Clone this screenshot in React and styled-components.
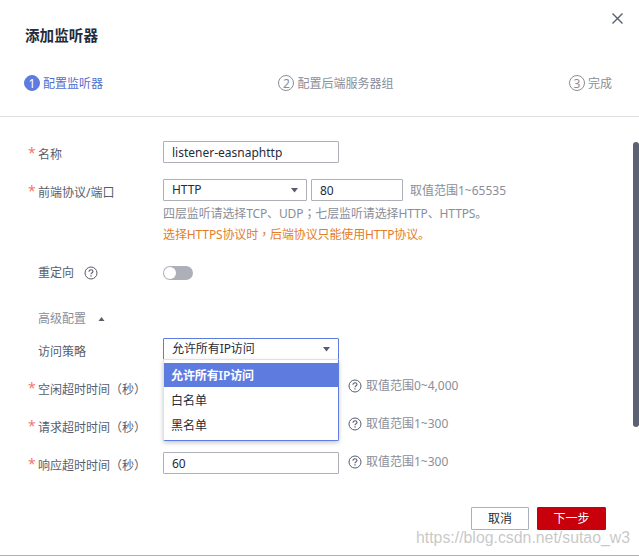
import styled, { createGlobalStyle } from "styled-components";

const GlobalStyle = createGlobalStyle`
  * {
    box-sizing: border-box;
  }

  body {
    margin: 0;
    background: #fff;
    overflow: hidden;
    font-family: "Noto Sans", "Noto Sans CJK SC", sans-serif;
    font-size: 12px;
    line-height: 20px;
    color: #575d6c;
  }
`;

const Dialog = styled.div`
  position: relative;
  display: flex;
  flex-direction: column;
  width: 639px;
  height: 556px;
  border-bottom: 1px solid #b0b0b0;
`;

const Header = styled.header`
  display: flex;
  justify-content: space-between;
  height: 73px;
  padding: 0 16px 0 25px;
`;

const Title = styled.h1`
  margin: 24px 0 0;
  font-size: 14.6px;
  font-weight: 700;
  line-height: 22px;
  color: #252b3a;
`;

const CloseButton = styled.button`
  width: 11px;
  height: 11px;
  margin-top: 13px;
  padding: 0;
  border: 0;
  background: none;

  svg {
    display: block;
  }
`;

const Steps = styled.div`
  display: flex;
  justify-content: space-between;
  height: 44px;
  padding: 0 27px 0 24px;
  border-bottom: 1px solid #dfdfe1;
`;

const StepItem = styled.div`
  display: flex;
  height: 20px;
  gap: 3px;
  color: ${(props) => (props.$active ? "#526ecc" : "#8a8e99")};
  line-height: 22px;

  span {
    width: 16px;
    height: 16px;
    margin-top: 2px;
    border: 1px solid ${(props) => (props.$active ? "#5e7ce0" : "#8a8e99")};
    border-radius: 50%;
    background: ${(props) => (props.$active ? "#5e7ce0" : "#fff")};
    color: ${(props) => (props.$active ? "#fff" : "#8a8e99")};
    line-height: 15px;
    text-align: center;
  }
`;

const Main = styled.main`
  display: flex;
  justify-content: space-between;
  height: 390px;
`;

const Form = styled.div`
  padding: 24px 0 0 28px;
`;

const Row = styled.div`
  display: flex;
  height: ${(props) => props.$height || 38}px;
`;

const Label = styled.div`
  display: flex;
  width: 135px;
  height: 20px;
  margin-top: ${(props) => props.$top ?? 4}px;
  color: ${(props) => (props.$muted ? "#8a8e99" : "#575d6c")};
  white-space: nowrap;
`;

const Mark = styled.span`
  width: 10px;
  color: #f66f6a;
  font-family: "Open Sans", sans-serif;
  font-size: 14px;
  line-height: 16px;
`;

const Controls = styled.div`
  display: flex;
  gap: 4px;
`;

const Input = styled.input`
  width: ${(props) => props.$width || 176}px;
  height: 22px;
  padding: 1px 8px 0;
  border: 1px solid #adb0b8;
  border-radius: 1px;
  outline: 0;
  background: #fff;
  color: #252b3a;
  font: inherit;
`;

const SelectBox = styled.div`
  display: flex;
  justify-content: space-between;
  width: ${(props) => props.$width}px;
  height: 22px;
  padding: 0 8px;
  border: 1px solid ${(props) => (props.$open ? "#5e7ce0" : "#adb0b8")};
  border-radius: 1px;
  color: #252b3a;
  letter-spacing: -0.08px;
  line-height: 20px;

  svg {
    margin-top: 8px;
  }
`;

const SelectWrap = styled.div`
  position: relative;
`;

const Menu = styled.ul`
  position: absolute;
  z-index: 1;
  top: 21px;
  left: 0;
  width: 176px;
  height: 82px;
  margin: 0;
  padding: 3px 0 0;
  border: 1px solid #5e7ce0;
  border-top-color: #dfe1e6;
  border-left-color: #dfe1e6;
  border-radius: 0 0 2px 2px;
  background: #fff;
  box-shadow: 0 2px 4px rgba(37, 43, 58, 0.25);
  list-style: none;
`;

const Option = styled.li`
  height: ${(props) => (props.$selected ? 24 : 25)}px;
  padding-left: 7px;
  background: ${(props) => (props.$selected ? "#5e7ce0" : "#fff")};
  color: ${(props) => (props.$selected ? "#fff" : "#252b3a")};
  font-weight: ${(props) => (props.$selected ? 600 : 400)};
  letter-spacing: ${(props) => (props.$selected ? "-0.1px" : "0")};
  line-height: ${(props) => (props.$selected ? 25 : 27)}px;
`;

const Hint = styled.span`
  display: flex;
  height: 20px;
  margin-left: ${(props) => props.$left || 0}px;
  color: #8a8e99;
  line-height: ${(props) => props.$line || 20}px;

  svg {
    margin: 3px 4px 0 0;
  }
`;

const Note = styled.p`
  height: 21px;
  margin: 0;
  color: ${(props) => (props.$warn ? "#e37d29" : "#8a8e99")};
  letter-spacing: -0.12px;
  line-height: ${(props) => (props.$warn ? 24 : 23)}px;
`;

// comma and semicolon sit in the middle of their cell
const Punct = styled.span`
  font-family: "Noto Sans CJK TC", sans-serif;
`;

const Toggle = styled.span`
  width: 30px;
  height: 14px;
  margin-top: 3px;
  padding: 1px;
  border-radius: 7px;
  background: #adb0b8;

  i {
    display: block;
    width: 12px;
    height: 12px;
    border-radius: 50%;
    background: #fff;
  }
`;

const ScrollBar = styled.div`
  width: 6px;
  height: 285px;
  margin-top: 25px;
  border-radius: 3px;
  background: #5c6173;
`;

const Footer = styled.footer`
  display: flex;
  justify-content: flex-end;
  gap: 8px;
  padding-right: 33px;
`;

const Button = styled.button`
  width: ${(props) => (props.$primary ? 69 : 58)}px;
  height: 23px;
  padding: 0;
  border: 1px solid ${(props) => (props.$primary ? "#c7000b" : "#adb0b8")};
  border-radius: 1px;
  background: ${(props) => (props.$primary ? "#c7000b" : "#fff")};
  color: ${(props) => (props.$primary ? "#fff" : "#252b3a")};
  font: inherit;
`;

const Watermark = styled.div`
  position: absolute;
  top: 528px;
  left: 416px;
  color: rgba(190, 190, 190, 0.85);
  font-family: "Liberation Sans", sans-serif;
  font-size: 15.85px;
  white-space: nowrap;
`;

const Caret = () => (
  <svg width="7" height="5" viewBox="0 0 7 5">
    <path d="M0 0h7L3.5 4.5z" fill="#575d6c" />
  </svg>
);

const HelpIcon = () => (
  <svg width="14" height="14" viewBox="0 0 14 14" fill="none" stroke="#575d6c">
    <circle cx="7" cy="7" r="6" />
    <path d="M5 5.7C5 4.5 5.8 3.8 7 3.8s2 .7 2 1.7c0 1.2-2 1.3-2 2.8" strokeWidth="1.1" />
    <path d="M7 9.3v1.2" strokeWidth="1.2" />
  </svg>
);

const Step = (props) => (
  <StepItem $active={props.active}>
    <span>{props.number}</span>
    {props.title}
  </StepItem>
);

const FieldLabel = (props) => (
  <Label $top={props.top} $muted={props.muted}>
    <Mark>{props.required && "*"}</Mark>
    {props.children}
  </Label>
);

const TimeoutRow = (props) => (
  <Row>
    <FieldLabel required>{props.label}</FieldLabel>
    <Controls>
      <Input defaultValue="60" />
      <Hint $left={5}>
        <HelpIcon />
        {props.range}
      </Hint>
    </Controls>
  </Row>
);

const App = () => {
  return (
    <Dialog>
      <GlobalStyle />
      <Header>
        <Title>添加监听器</Title>
        <CloseButton aria-label="关闭">
          <svg width="11" height="11" viewBox="0 0 11 11" stroke="#575d6c" strokeWidth="1.4">
            <path d="M.5.5l10 10M10.5.5l-10 10" />
          </svg>
        </CloseButton>
      </Header>
      <Steps>
        <Step number="1" title="配置监听器" active />
        <Step number="2" title="配置后端服务器组" />
        <Step number="3" title="完成" />
      </Steps>
      <Main>
        <Form>
          <Row>
            <FieldLabel required>名称</FieldLabel>
            <Input defaultValue="listener-easnaphttp" />
          </Row>
          <Row $height={84}>
            <FieldLabel required>前端协议/端口</FieldLabel>
            <div>
              <Controls>
                <SelectBox $width={144}>
                  HTTP
                  <Caret />
                </SelectBox>
                <Input defaultValue="80" $width={92} />
                <Hint $left={3} $line={24}>
                  取值范围1~65535
                </Hint>
              </Controls>
              <Note>
                四层监听请选择TCP、UDP<Punct>；</Punct>七层监听请选择HTTP、HTTPS。
              </Note>
              <Note $warn>
                选择HTTPS协议时<Punct>，</Punct>后端协议只能使用HTTP协议。
              </Note>
            </div>
          </Row>
          <Row $height={44}>
            <FieldLabel top={0}>
              重定向
              <Hint $left={10}>
                <HelpIcon />
              </Hint>
            </FieldLabel>
            <Toggle>
              <i />
            </Toggle>
          </Row>
          <Row $height={31}>
            <FieldLabel top={2} muted>
              高级配置
              <Hint $left={12}>
                <svg width="7" height="12" viewBox="0 0 7 12">
                  <path d="M0.5 9h6L3.5 5z" fill="#575d6c" />
                </svg>
              </Hint>
            </FieldLabel>
          </Row>
          <Row>
            <FieldLabel>访问策略</FieldLabel>
            <SelectWrap>
              <SelectBox $width={176} $open>
                允许所有IP访问
                <Caret />
              </SelectBox>
              <Menu>
                <Option $selected>允许所有IP访问</Option>
                <Option>白名单</Option>
                <Option>黑名单</Option>
              </Menu>
            </SelectWrap>
          </Row>
          <TimeoutRow label="空闲超时时间（秒）" range="取值范围0~4,000" />
          <TimeoutRow label="请求超时时间（秒）" range="取值范围1~300" />
          <TimeoutRow label="响应超时时间（秒）" range="取值范围1~300" />
        </Form>
        <ScrollBar />
      </Main>
      <Footer>
        <Button>取消</Button>
        <Button $primary>下一步</Button>
      </Footer>
      <Watermark>https://blog.csdn.net/sutao_w3</Watermark>
    </Dialog>
  );
};

export default App;
